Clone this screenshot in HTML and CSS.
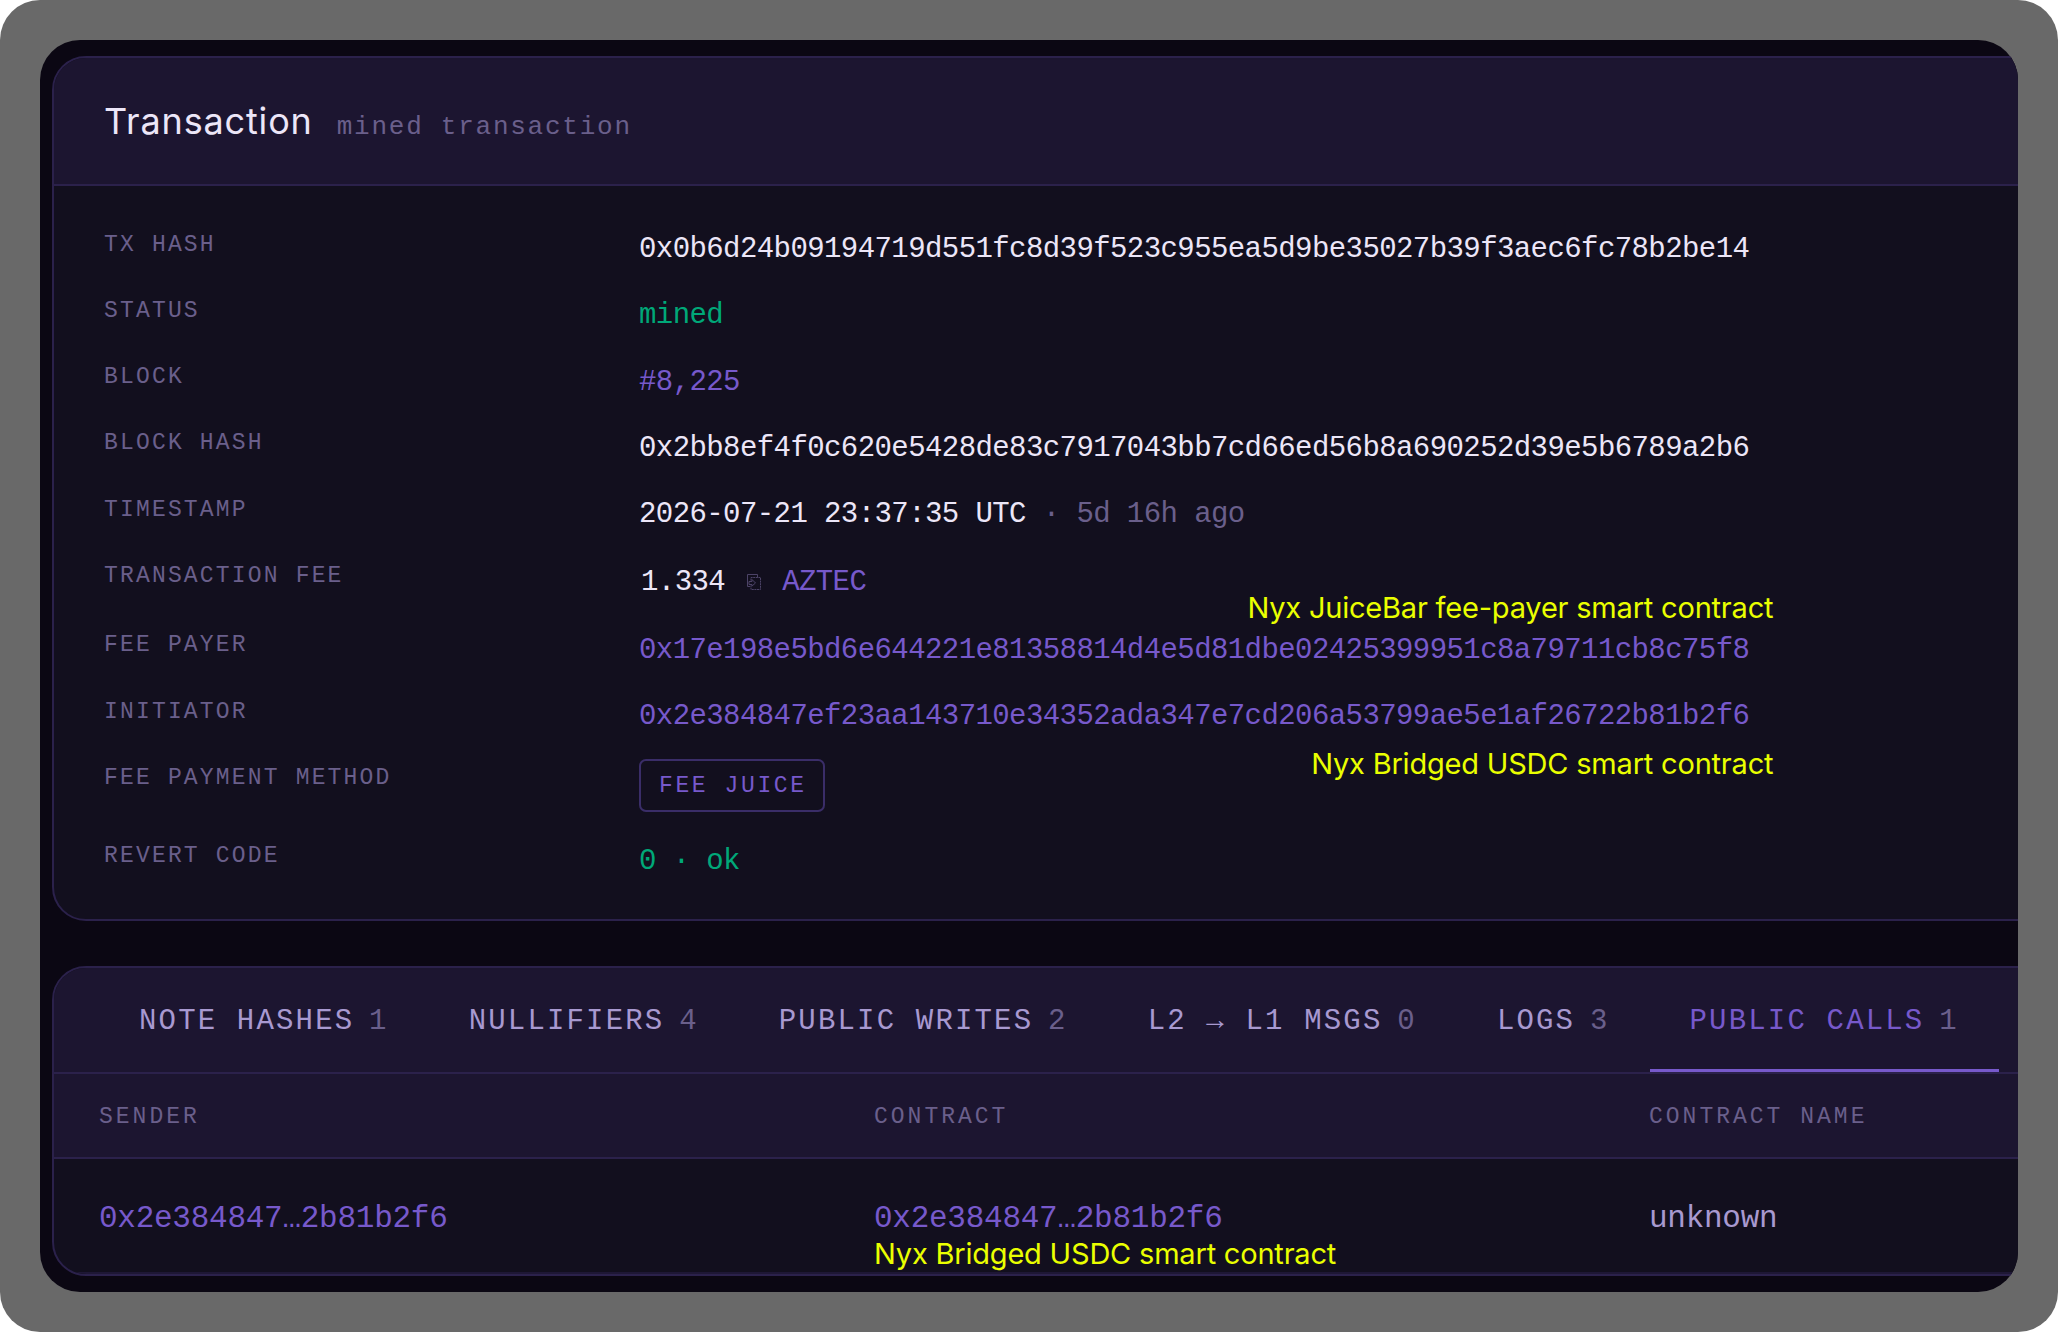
FILE: index.html
```
<!DOCTYPE html>
<html lang="en">
<head>
  <meta charset="UTF-8" />
  <meta name="viewport" content="width=device-width, initial-scale=1.0" />
  <title>Transaction</title>
  <link rel="stylesheet" href="styles.css">
</head>
<body>
  <div class="backdrop">
    <main class="frame">

      <!-- ===== Transaction details ===== -->
      <section class="card">
        <header class="card-header">
          <h1>Transaction</h1>
          <span class="subtitle">mined transaction</span>
        </header>

        <dl class="details">
          <div class="row">
            <dt>TX HASH</dt>
            <dd>0x0b6d24b09194719d551fc8d39f523c955ea5d9be35027b39f3aec6fc78b2be14</dd>
          </div>
          <div class="row">
            <dt>STATUS</dt>
            <dd class="ok">mined</dd>
          </div>
          <div class="row">
            <dt>BLOCK</dt>
            <dd class="link">#8,225</dd>
          </div>
          <div class="row">
            <dt>BLOCK HASH</dt>
            <dd>0x2bb8ef4f0c620e5428de83c7917043bb7cd66ed56b8a690252d39e5b6789a2b6</dd>
          </div>
          <div class="row">
            <dt>TIMESTAMP</dt>
            <dd>2026-07-21 23:37:35 UTC <span class="muted">· 5d 16h ago</span></dd>
          </div>
          <div class="row row-fee">
            <dt>TRANSACTION FEE</dt>
            <dd class="fee">
              <span>1.334</span>
              <svg class="copy-icon" viewBox="0 0 16 18" width="16" height="18">
                <path d="M4 13.5H1.500V1.500H11.500V4.500" />
                <path class="dashed" d="M5 7.500V4.500H14.500V16.500H5V12.500" />
                <path d="M3 8.500H6V6.500L9.500 10L6 13V11.500H3Z" />
              </svg>
              <span class="link">AZTEC</span>
            </dd>
          </div>
          <div class="row row-payer">
            <dt>FEE PAYER</dt>
            <dd class="link">
              0x17e198e5bd6e644221e81358814d4e5d81dbe02425399951c8a79711cb8c75f8
              <span class="note note-above">Nyx JuiceBar fee-payer smart contract</span>
            </dd>
          </div>
          <div class="row">
            <dt>INITIATOR</dt>
            <dd class="link">
              0x2e384847ef23aa143710e34352ada347e7cd206a53799ae5e1af26722b81b2f6
              <span class="note note-below">Nyx Bridged USDC smart contract</span>
            </dd>
          </div>
          <div class="row row-method">
            <dt>FEE PAYMENT METHOD</dt>
            <dd><span class="badge">FEE JUICE</span></dd>
          </div>
          <div class="row">
            <dt>REVERT CODE</dt>
            <dd class="ok">0 · ok</dd>
          </div>
        </dl>
      </section>

      <!-- ===== Transaction effects ===== -->
      <section class="card effects">
        <nav class="tabs">
          <a class="tab">NOTE HASHES<span class="count">1</span></a>
          <a class="tab">NULLIFIERS<span class="count">4</span></a>
          <a class="tab">PUBLIC WRITES<span class="count">2</span></a>
          <a class="tab">L2 → L1 MSGS<span class="count">0</span></a>
          <a class="tab">LOGS<span class="count">3</span></a>
          <a class="tab active">PUBLIC CALLS<span class="count">1</span></a>
        </nav>

        <div class="calls calls-head">
          <div>SENDER</div>
          <div>CONTRACT</div>
          <div>CONTRACT NAME</div>
        </div>
        <div class="calls calls-row">
          <div class="link">0x2e384847…2b81b2f6</div>
          <div class="link">
            0x2e384847…2b81b2f6
            <span class="note note-cell">Nyx Bridged USDC smart contract</span>
          </div>
          <div class="name">unknown</div>
        </div>
      </section>

    </main>
  </div>
</body>
</html>
```

FILE: styles.css
```
* {
  box-sizing: border-box;
}

:root {
  --bg: #0b0713;
  --panel: #120f1e;
  --panel-head: #1c1530;
  --line: #2b214b;
  --text: #ece6f8;
  --text-soft: #a899d0;
  --muted: #6a5f8b;
  --accent: #7759cb;
  --green: #00a878;
  --note: #eaff00;
  --mono: "Liberation Mono", "Courier New", monospace;
  --sans: Inter, "Liberation Sans", sans-serif;
}

html, body {
  margin: 0;
  height: 100%;
  background: #fff;
}

body {
  font-family: var(--mono);
  color: var(--text);
  overflow: hidden;
}

.backdrop {
  height: 1332px;
  padding: 40px;
  background: #696969;
  border-radius: 40px;
}

.frame {
  height: 1252px;
  padding: 16px 0 0 12px;
  background: var(--bg);
  border-radius: 40px;
  overflow: hidden;
}

/* cards run past the right edge of the frame */
.card {
  width: 2330px;
  background: var(--panel);
  border: 2px solid var(--line);
  border-radius: 34px;
  overflow: hidden;
}

/* ===== Header ===== */
.card-header {
  display: flex;
  align-items: baseline;
  gap: 24px;
  height: 128px;
  padding: 39px 50px 0;
  background: var(--panel-head);
  border-bottom: 2px solid var(--line);
}

h1 {
  margin: 0;
  font-family: var(--sans);
  font-size: 36px;
  font-weight: 400;
  line-height: 48px;
  letter-spacing: 0.85px;
}

.subtitle {
  color: var(--muted);
  font-size: 26px;
  letter-spacing: 1.75px;
}

/* ===== Details ===== */
.details {
  height: 733px;
  margin: 0;
  padding-top: 41.5px;
}

.row {
  display: grid;
  grid-template-columns: 535px 1fr;
  height: 66.3px;
  padding-left: 50px;
}

dt {
  color: var(--muted);
  font-size: 23px;
  line-height: 34px;
  letter-spacing: 2.17px;
}

dd {
  position: relative;
  justify-self: start;
  margin: 0;
  padding-top: 4.5px;
  font-size: 29px;
  line-height: 36px;
  letter-spacing: -0.58px;
  white-space: nowrap;
}

.row-fee {
  height: 69.5px;
}

.row-fee dd {
  padding-top: 6px;
}

.row-method {
  height: 78px;
}

.row-method dd {
  padding-top: 0;
}

.fee {
  display: flex;
  align-items: baseline;
  padding-left: 2px;
}

.copy-icon {
  align-self: flex-start;
  margin: 8px 20px 0 21px;
  fill: none;
  stroke: #4c4367;
  stroke-width: 1;
}

.dashed {
  stroke-dasharray: 2 0.6;
}

.badge {
  display: block;
  height: 53px;
  margin-top: -2px;
  padding: 0 16px 0 18px;
  border: 2px solid #3a2d68;
  border-radius: 7px;
  color: var(--accent);
  font-size: 23px;
  line-height: 51px;
  letter-spacing: 2.6px;
}

.link {
  color: var(--accent);
}

.ok {
  color: var(--green);
}

.muted {
  color: var(--muted);
}

/* ===== Yellow annotations over the content ===== */
.note {
  position: absolute;
  color: var(--note);
  font-family: var(--sans);
  font-size: 29px;
  line-height: 36px;
  letter-spacing: -0.2px;
  white-space: nowrap;
}

.note-above {
  right: -24px;
  top: -38px;
}

.note-below {
  right: -24px;
  top: 51px;
}

.note-cell {
  left: 45px;
  top: 77px;
}

/* ===== Tabs ===== */
.effects {
  height: 310px;
  margin-top: 45px;
}

.tabs {
  display: flex;
  height: 106px;
  padding-left: 45px;
  background: var(--panel-head);
  border-bottom: 2px solid var(--line);
}

.tab {
  padding: 0 40px;
  border-bottom: 3px solid transparent;
  color: var(--text-soft);
  font-size: 29px;
  line-height: 107px;
  letter-spacing: 2.17px;
  white-space: nowrap;
}

.tab.active {
  color: var(--accent);
  border-bottom-color: var(--accent);
}

.count {
  margin-left: 14.8px;
  color: var(--muted);
}

/* ===== Public calls table ===== */
.calls {
  display: grid;
  grid-template-columns: repeat(3, 775px);
}

.calls > div {
  position: relative;
  padding-left: 45px;
}

.calls-head {
  height: 85px;
  background: var(--panel-head);
  border-bottom: 2px solid var(--line);
  color: var(--muted);
  font-size: 23px;
  line-height: 87px;
  letter-spacing: 3px;
}

.calls-row {
  height: 115px;
  border-bottom: 2px solid #1e1735;
  font-size: 31px;
  line-height: 119px;
  letter-spacing: -0.26px;
}

.name {
  color: var(--text-soft);
}
```
